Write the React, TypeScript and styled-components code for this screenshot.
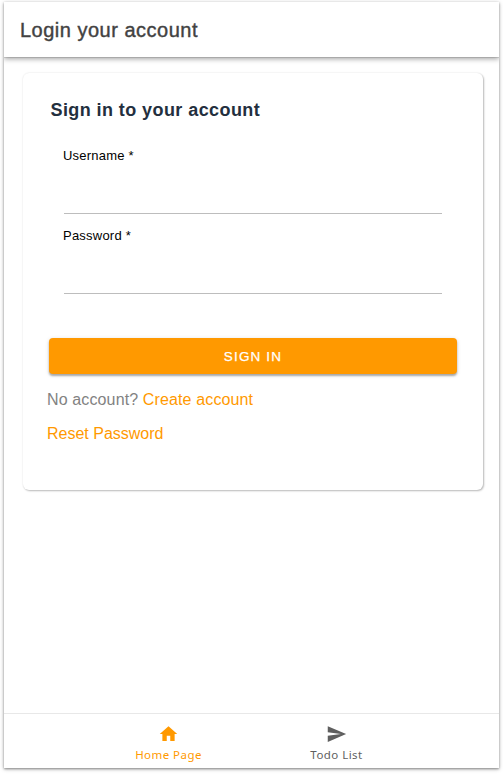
import React from "react";
import styled, { createGlobalStyle } from "styled-components";

const GlobalStyle = createGlobalStyle`
  *, *::before, *::after { box-sizing: border-box; }
  html, body { margin: 0; background: #fff; }
  body { overflow: hidden; font-family: "Liberation Sans", Arial, sans-serif; }
`;

const Page = styled.div`
  height: 774px;
  padding: 2px 4px 6px;
  background: #fff;
`;

const Screen = styled.main`
  width: 495px;
  height: 766px;
  display: flex;
  flex-direction: column;
  background: #fff;
  box-shadow: 0 1px 4px rgba(0, 0, 0, 0.3), 0 1px 2px rgba(0, 0, 0, 0.3);
`;

const Header = styled.header`
  height: 55px;
  flex: none;
  display: flex;
  align-items: center;
  padding: 0 16px 0;
  background: #fff;
  box-shadow: 0 1px 0 rgba(0, 0, 0, 0.1), 0 2px 5px rgba(0, 0, 0, 0.36);
  clip-path: inset(0 0 -12px 0);
`;

const Title = styled.h1`
  margin: 0;
  font-size: 20px;
  line-height: 24px;
  font-weight: 400;
  letter-spacing: 0.5px;
  color: #424242;
  -webkit-text-stroke: 0.4px #424242;
`;

const Content = styled.div`
  flex: 1;
  padding: 16px 16px 0 19px;
`;

const Card = styled.section`
  height: 417px;
  padding: 24px 26px 0 24px;
  border-radius: 6px;
  background: #fff;
  box-shadow: 1px 1px 2px rgba(0, 0, 0, 0.26), 0 0 2px rgba(0, 0, 0, 0.1);
`;

const Heading = styled.h2`
  margin: 0 0 0 3.5px;
  font-size: 18px;
  line-height: 26px;
  letter-spacing: 0.42px;
  color: #232f3e;
`;

const Field = styled.label`
  display: block;
  height: 80px;
  margin: 0 15px 0 17px;
  padding-top: 11px;
  font-size: 13px;
  line-height: 16px;
  letter-spacing: 0.22px;
  color: #000;
`;

const Fields = styled.div`
  padding-top: 14px;
`;

const Label = styled.span`
  display: block;
  margin: 0 0 0 -1px;
`;

const Input = styled.input`
  display: block;
  width: 100%;
  height: 50px;
  padding: 0;
  border: 0;
  border-bottom: 1px solid #bdbdbd;
  outline: none;
  background: transparent;
  font-size: 16px;
`;

const SubmitButton = styled.button`
  display: block;
  width: 408px;
  height: 36px;
  margin: 41px 0 0 2px;
  padding: 0;
  border: 0;
  border-radius: 4px;
  background: #ff9900;
  color: #fff;
  font-family: inherit;
  font-size: 13.5px;
  font-weight: 400;
  letter-spacing: 1.15px;
  -webkit-text-stroke: 0.25px #fff;
  box-shadow: 0 2px 2px rgba(0, 0, 0, 0.28), 0 1px 4px rgba(0, 0, 0, 0.15);
`;

const Hint = styled.p<{ $top: number; $spacing?: number }>`
  margin: ${({ $top }) => $top}px 0 0;
  font-size: 16px;
  line-height: 20px;
  letter-spacing: ${({ $spacing = 0 }) => $spacing}px;
  color: #828282;
`;

const TextLink = styled.a`
  color: #ff9900;
  text-decoration: none;
`;

const TabBar = styled.nav`
  height: 55px;
  flex: none;
  display: flex;
  justify-content: center;
  padding-left: 2px;
  border-top: 1px solid #e8e8e8;
`;

const Tab = styled.a<{ $active?: boolean }>`
  width: 168px;
  display: flex;
  flex-direction: column;
  align-items: center;
  padding-top: 9px;
  color: ${({ $active }) => ($active ? "#ff9900" : "#5f5f5f")};
  font-family: "Noto Sans", sans-serif;
  font-size: 11.5px;
  line-height: 16px;
  letter-spacing: 0.45px;
`;

const TabIcon = styled.svg`
  width: 21px;
  height: 22px;
  margin-bottom: 2px;
  fill: currentColor;
`;

export default function App() {
  return (
    <Page>
      <GlobalStyle />
      <Screen>
        <Header>
          <Title>Login your account</Title>
        </Header>
        <Content>
          <Card>
            <Heading>Sign in to your account</Heading>
            <Fields>
              <Field>
                <Label>Username *</Label>
                <Input type="text" />
              </Field>
              <Field>
                <Label>Password *</Label>
                <Input type="password" />
              </Field>
            </Fields>
            <SubmitButton type="button">SIGN IN</SubmitButton>
            <Hint $top={16} $spacing={0.13}>
              No account? <TextLink>Create account</TextLink>
            </Hint>
            <Hint $top={14}>
              <TextLink>Reset Password</TextLink>
            </Hint>
          </Card>
        </Content>
        <TabBar>
          <Tab $active>
            <TabIcon viewBox="0 0 24 24">
              <path d="M10 20v-6h4v6h5v-8h3L12 3 2 12h3v8z" />
            </TabIcon>
            Home Page
          </Tab>
          <Tab>
            <TabIcon viewBox="0 0 24 24">
              <path d="M2.01 21L23 12 2.01 3 2 10l15 2-15 2z" />
            </TabIcon>
            Todo List
          </Tab>
        </TabBar>
      </Screen>
    </Page>
  );
}
